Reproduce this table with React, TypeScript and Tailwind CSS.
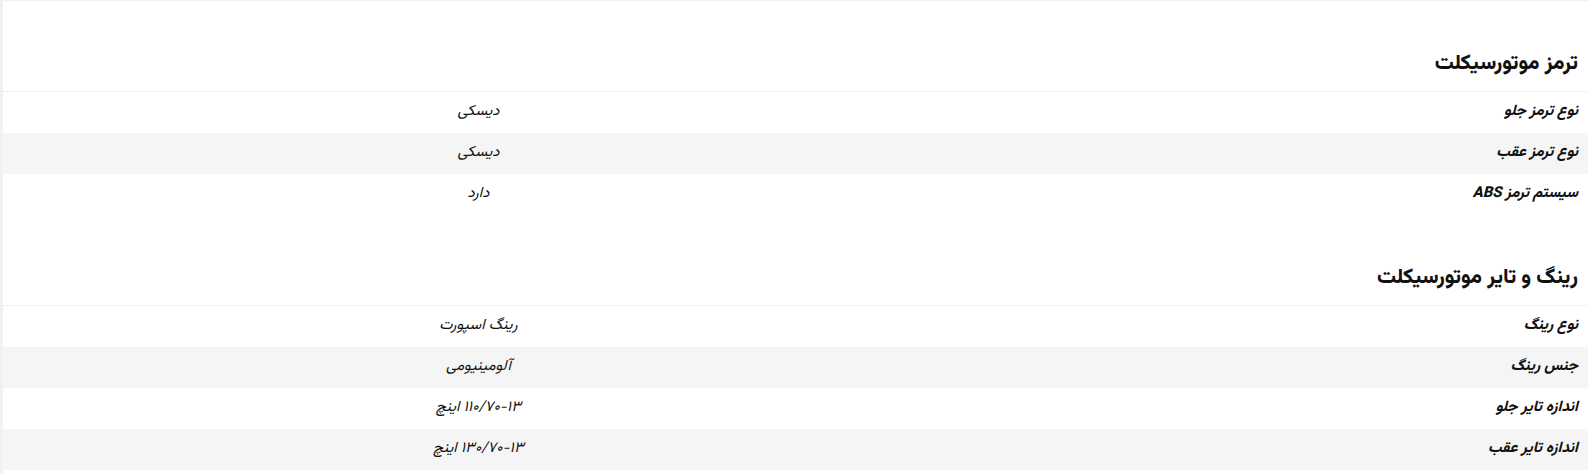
import React from 'react';

interface Spec {
  label: string;
  value: string;
  unit?: string;
}

const sections: { title: string; rows: Spec[] }[] = [
  {
    title: 'ترمز موتورسیکلت',
    rows: [
      { label: 'نوع ترمز جلو', value: 'دیسکی' },
      { label: 'نوع ترمز عقب', value: 'دیسکی' },
      { label: 'سیستم ترمز ABS', value: 'دارد' },
    ],
  },
  {
    title: 'رینگ و تایر موتورسیکلت',
    rows: [
      { label: 'نوع رینگ', value: 'رینگ اسپورت' },
      { label: 'جنس رینگ', value: 'آلومینیومی' },
      { label: 'اندازه تایر جلو', value: '۱۱۰/۷۰-۱۳', unit: 'اینچ' },
      { label: 'اندازه تایر عقب', value: '۱۳۰/۷۰-۱۳', unit: 'اینچ' },
    ],
  },
];

const SpecSection: React.FC<{ title: string; rows: Spec[] }> = ({ title, rows }) => {
  return (
    <section>
      <h3 className="pt-[48px] pb-[12px] pr-[10px] text-[21px] leading-[30px] font-extrabold text-[#111] border-b border-dotted border-[#e3e3e3]">
        {title}
      </h3>
      <div>
        {rows.map((row, i) => (
          <div
            key={row.label}
            className={`flex h-[41px] items-center ${i % 2 === 1 ? 'bg-[#f5f5f5]' : 'bg-white'}`}
          >
            <div className="w-[40%] pr-[10px] text-[15px] font-extrabold italic text-[#111]">{row.label}</div>
            <div className="flex-1 text-center text-[15px] italic text-[#111]">
              {row.unit ? (
                <>
                  <span className="tracking-[-1.5px]">{row.value}</span> {row.unit}
                </>
              ) : (
                row.value
              )}
            </div>
          </div>
        ))}
      </div>
    </section>
  );
};

const App: React.FC = () => {
  return (
    <div
      dir="rtl"
      className="min-h-[474px] bg-white border-l-[3px] border-t border-[#f1f1f1]"
      style={{ fontFamily: 'Vazirmatn, "DejaVu Sans", sans-serif' }}
    >
      {sections.map((s) => (
        <SpecSection key={s.title} title={s.title} rows={s.rows} />
      ))}
    </div>
  );
};

export default App;
